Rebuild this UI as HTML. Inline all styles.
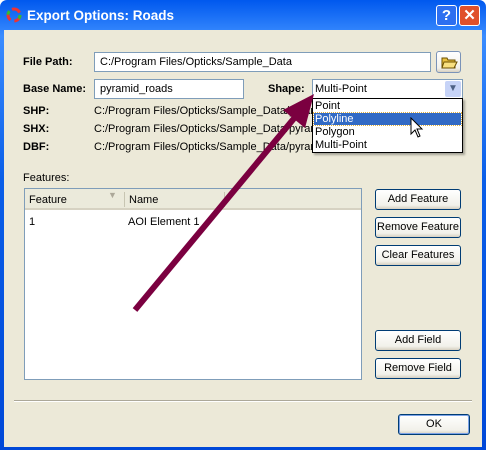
<!DOCTYPE html><html><head><style>
body{margin:0;width:486px;height:450px;overflow:hidden;font-family:"Liberation Sans",Tahoma,sans-serif;font-size:11px;}
.win{position:absolute;left:0;top:0;width:486px;height:450px;background:linear-gradient(#0058ee,#3a8cff 8%,#0a5ee8 40%,#0048d8);border-radius:7px 7px 0 0;}
.body{position:absolute;left:4px;top:30px;width:478px;height:417px;background:#ECE9D8;}
.a{position:absolute;}
.t{position:absolute;white-space:nowrap;}
.b{font-weight:bold;}
.inp{position:absolute;background:#fff;border:1px solid #7f9db9;box-sizing:border-box;padding-left:5px;line-height:18px;}
.btn{position:absolute;border:1px solid #003c74;border-radius:3px;background:linear-gradient(#fff,#f2f1ea 80%,#d6d0c0);box-sizing:border-box;text-align:center;line-height:18px;}
</style></head><body>
<div class="win">
<svg class="a" style="left:6px;top:7px" width="16" height="16"><circle cx="8" cy="8" r="6" fill="none" stroke="#e33" stroke-width="3" stroke-dasharray="9 4"/><circle cx="8" cy="8" r="6" fill="none" stroke="#3b3" stroke-width="3" stroke-dasharray="4 15" /></svg>
<div class="t b" style="left:27px;top:8px;color:#fff;font-size:13.5px;">Export Options: Roads</div>
<div class="a" style="left:436px;top:5px;width:21px;height:21px;border:1px solid #fff;border-radius:3px;background:#2d6ff0;box-sizing:border-box;color:#fff;font-weight:bold;font-size:15px;text-align:center;line-height:19px;">?</div>
<div class="a" style="left:459px;top:5px;width:21px;height:21px;border:1px solid #fff;border-radius:3px;background:#e0502a;box-sizing:border-box;color:#fff;font-weight:bold;font-size:15px;text-align:center;line-height:19px;">✕</div>
<div class="body"></div>
</div>
<div class="t b" style="left:23px;top:56px">File Path:</div>
<div class="inp" style="left:94px;top:52px;width:337px;height:20px">C:/Program Files/Opticks/Sample_Data</div>
<div class="btn" style="left:436px;top:51px;width:25px;height:22px;border-color:#7a93b8"><svg width="18" height="16" style="margin-top:2px"><path d="M2 4h5l1 2h7v8H2z" fill="#e8c040" stroke="#6b5000"/><path d="M4 8h13l-3 6H2z" fill="#f8e080" stroke="#6b5000"/></svg></div>
<div class="t b" style="left:23px;top:83px">Base Name:</div>
<div class="inp" style="left:94px;top:79px;width:150px;height:20px">pyramid_roads</div>
<div class="t b" style="left:268px;top:83px">Shape:</div>
<div class="inp" style="left:312px;top:79px;width:151px;height:20px;padding-left:2px">Multi-Point</div>
<div class="a" style="left:445px;top:81px;width:16px;height:16px;background:#c6d3f7;border-radius:2px;color:#4d6185;text-align:center;font-size:10px;line-height:16px">▼</div>
<div class="t b" style="left:23px;top:105px">SHP:</div>
<div class="t b" style="left:23px;top:123px">SHX:</div>
<div class="t b" style="left:23px;top:141px">DBF:</div>
<div class="t" style="left:94px;top:105px">C:/Program Files/Opticks/Sample_Data/pyramid_roads.shp</div>
<div class="t" style="left:94px;top:123px">C:/Program Files/Opticks/Sample_Data/pyramid_roads.shx</div>
<div class="t" style="left:94px;top:141px">C:/Program Files/Opticks/Sample_Data/pyramid_roads.dbf</div>
<div class="a" style="left:312px;top:98px;width:151px;height:55px;background:#fff;border:1px solid #000;box-sizing:border-box;box-shadow:2px 2px 2px rgba(0,0,0,.3)">
<div class="t" style="left:2px;top:1px">Point</div>
<div class="a" style="left:1px;top:14px;width:147px;height:12px;background:#316ac5;outline:1px dotted #e0b040"></div>
<div class="t" style="left:2px;top:14px;color:#fff">Polyline</div>
<div class="t" style="left:2px;top:27px">Polygon</div>
<div class="t" style="left:2px;top:40px">Multi-Point</div>
</div>
<svg class="a" style="left:410px;top:117px" width="14" height="22"><path d="M1 1v16l4-4 3 7 2-1-3-7h5z" fill="#fff" stroke="#000"/></svg>
<div class="t" style="left:23px;top:172px">Features:</div>
<div class="a" style="left:24px;top:188px;width:338px;height:192px;border:1px solid #7f9db9;background:#fff;box-sizing:border-box">
<div class="a" style="left:0;top:0;width:336px;height:21px;background:#ebeadb;border-bottom:2px solid #d6d2c2;box-sizing:border-box"></div>
<div class="a" style="left:99px;top:3px;width:1px;height:15px;background:#c7c5b2"></div>
<div class="a" style="left:199px;top:3px;width:1px;height:15px;background:#c7c5b2"></div>
<div class="t" style="left:4px;top:5px">Feature</div>
<div class="t" style="left:83px;top:1px;color:#aca899;font-size:9px">▼</div>
<div class="t" style="left:104px;top:5px">Name</div>
<div class="t" style="left:4px;top:27px">1</div>
<div class="t" style="left:103px;top:27px">AOI Element 1</div>
</div>
<div class="btn" style="left:375px;top:189px;width:86px;height:21px">Add Feature</div>
<div class="btn" style="left:375px;top:217px;width:86px;height:21px">Remove Feature</div>
<div class="btn" style="left:375px;top:245px;width:86px;height:21px">Clear Features</div>
<div class="btn" style="left:375px;top:330px;width:86px;height:21px">Add Field</div>
<div class="btn" style="left:375px;top:358px;width:86px;height:21px">Remove Field</div>
<div class="a" style="left:14px;top:400px;width:458px;height:1px;background:#aca899;border-bottom:1px solid #fff"></div>
<div class="btn" style="left:398px;top:414px;width:72px;height:21px;box-shadow:inset 0 0 0 1px #7ba2e7">OK</div>
<svg class="a" style="left:0;top:0" width="486" height="450"><line x1="135" y1="310" x2="296" y2="116" stroke="#7b0040" stroke-width="6"/><path d="M314 94L283 110L305 128z" fill="#7b0040"/></svg>
</body></html>
